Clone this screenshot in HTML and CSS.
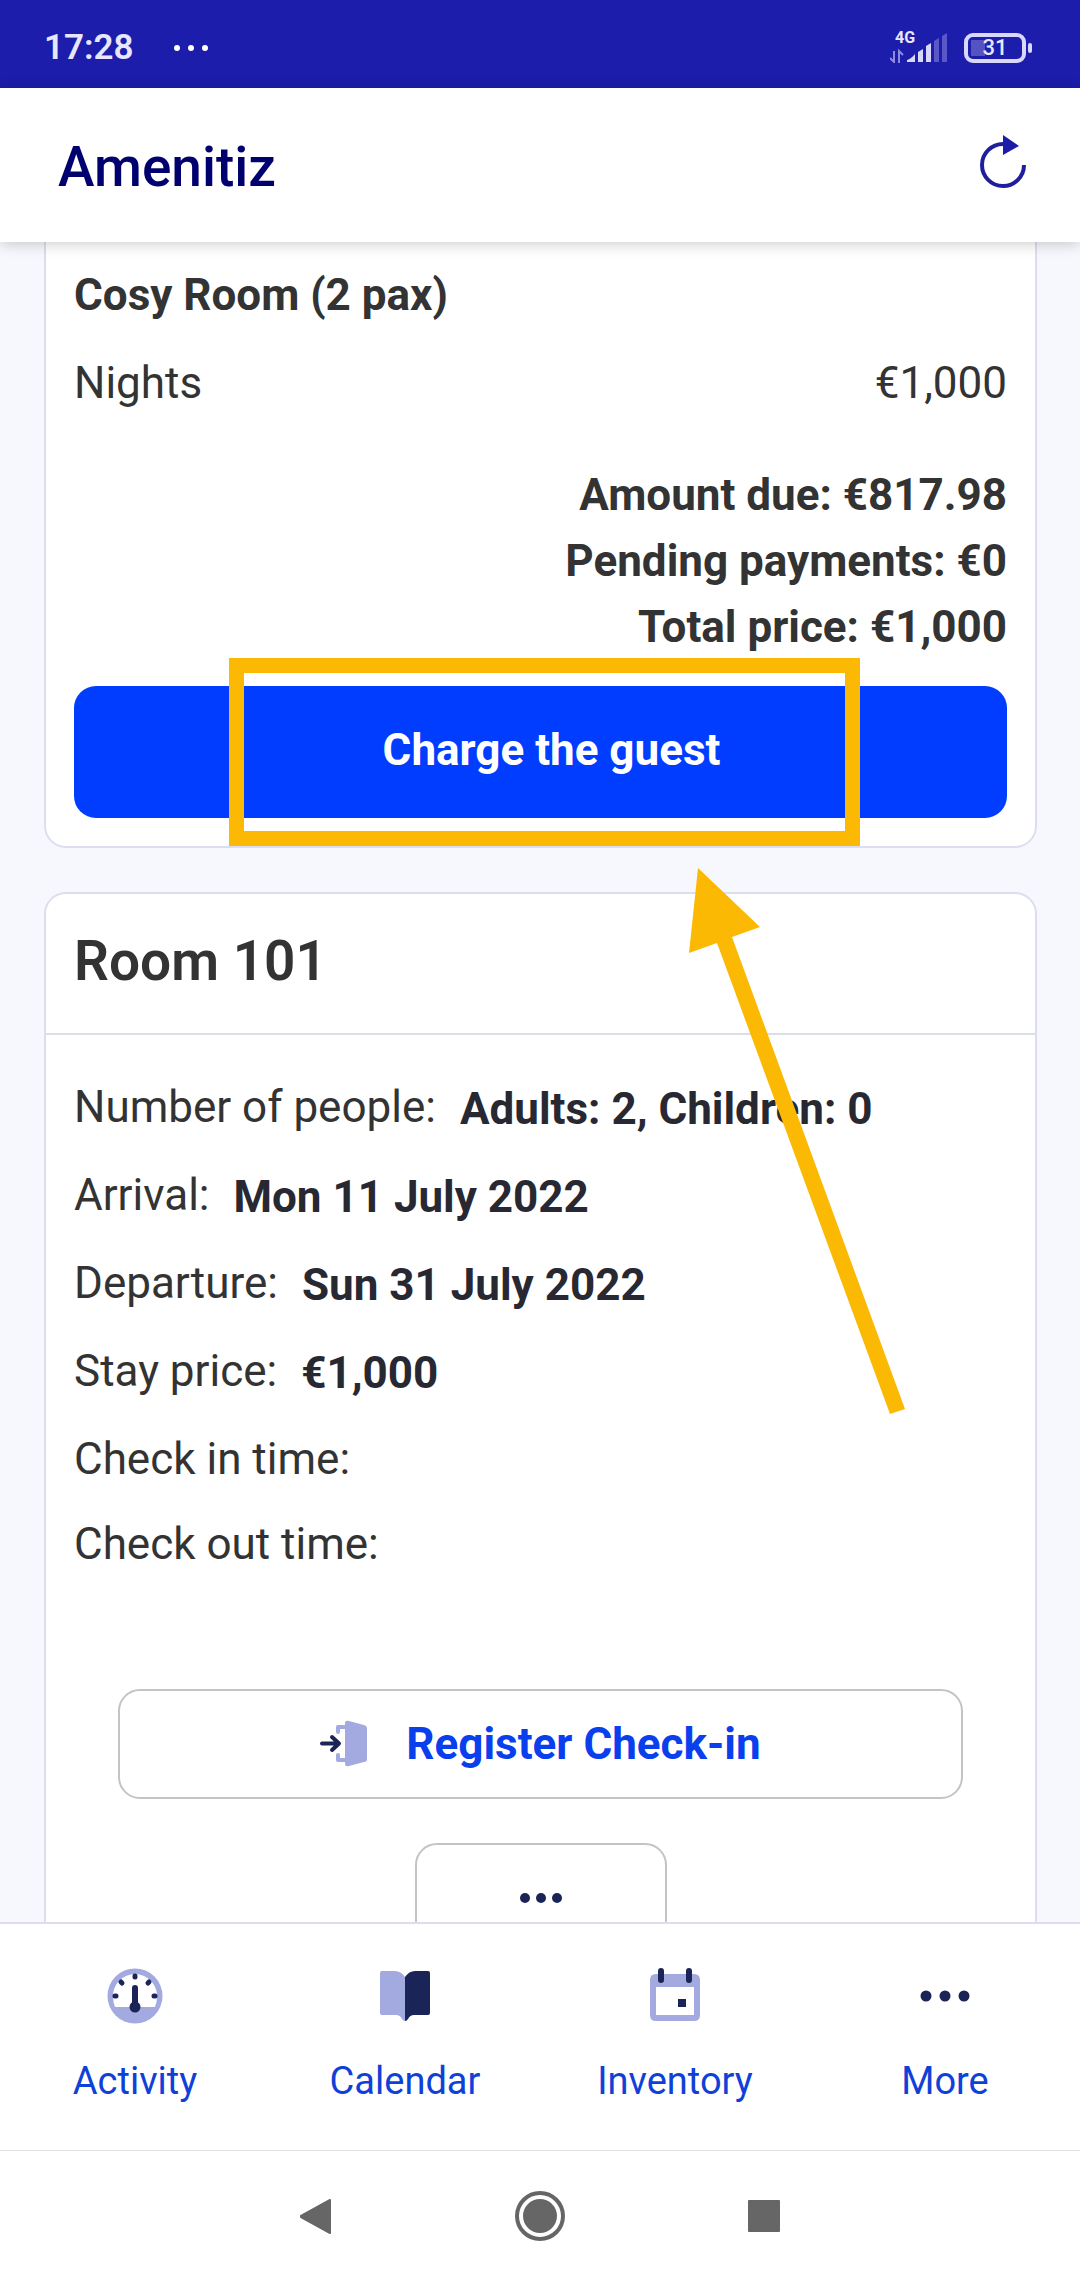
FILE: index.html
```html
<!DOCTYPE html>
<html lang="en">
<head>
    <meta charset="UTF-8">
    <meta name="viewport" content="width=device-width, initial-scale=1.0">
    <title>Amenitiz</title>
    <link rel="stylesheet" href="styles.css">
</head>
<body>
    <div class="status-bar">
        <div class="status-left">
            <span class="status-time">17:28</span>
            <svg class="status-dots" width="34" height="8" viewBox="0 0 34 8" fill="#fff">
                <circle cx="3" cy="4" r="3"/>
                <circle cx="17" cy="4" r="3"/>
                <circle cx="31" cy="4" r="3"/>
            </svg>
        </div>
        <div class="status-right">
            <div class="signal">
                <span class="signal-type">4G</span>
                <svg width="58" height="30" viewBox="0 0 58 30">
                    <path d="M4 18v11L0 25M9 30V18l4 4" fill="none" stroke="#8d8ae0" stroke-width="2"/>
                    <path d="M17 29v-2q4-1 8-6v8z" fill="#d9d7fb"/>
                    <path d="M28 29V19l5-3v13z" fill="#d9d7fb"/>
                    <path d="M36 29V13l5-3v19z" fill="#d9d7fb"/>
                    <path d="M44 29V8l5-3v24z" fill="#5a57c8"/>
                    <path d="M52 29V3l5-3v29z" fill="#5a57c8"/>
                </svg>
            </div>
            <div class="battery">
                <span class="battery-level">31</span>
            </div>
        </div>
    </div>

    <header class="app-bar">
        <h1 class="app-title">Amenitiz</h1>
        <button class="refresh-button" type="button" aria-label="Refresh">
            <svg width="46" height="54" viewBox="0 0 46 54">
                <path d="M44 30A21 21 0 1 1 23 9" fill="none" stroke="#1f1f9c" stroke-width="4"/>
                <path d="M23 0l16 11-16 9z" fill="#1c1ca8"/>
            </svg>
        </button>
    </header>

    <main class="content">
        <section class="card card-summary">
            <h2 class="room-type">Cosy Room (2 pax)</h2>
            <div class="price-row">
                <span>Nights</span>
                <span>€1,000</span>
            </div>
            <div class="totals">
                <p>Amount due: €817.98</p>
                <p>Pending payments: €0</p>
                <p>Total price: €1,000</p>
            </div>
            <div class="charge">
                <button class="charge-button" type="button">Charge the guest</button>
                <div class="highlight"></div>
                <svg class="arrow" width="230" height="560" viewBox="0 0 230 560" fill="#fbb904">
                    <path d="M18 8l62 59-28 10 173 472-15 5L37 83 9 93z"/>
                </svg>
            </div>
        </section>

        <section class="card card-room">
            <h2 class="room-title">Room 101</h2>
            <div class="room-body">
                <dl class="details">
                    <div class="detail"><dt>Number of people:</dt><dd>Adults: 2, Children: 0</dd></div>
                    <div class="detail"><dt>Arrival:</dt><dd>Mon 11 July 2022</dd></div>
                    <div class="detail"><dt>Departure:</dt><dd>Sun 31 July 2022</dd></div>
                    <div class="detail"><dt>Stay price:</dt><dd>€1,000</dd></div>
                    <div class="detail"><dt>Check in time:</dt></div>
                    <div class="detail"><dt>Check out time:</dt></div>
                </dl>
                <div class="actions">
                    <button class="outline-button" type="button">
                        <svg width="48" height="48" viewBox="0 0 48 48">
                            <path d="M25 3q0-3 4-2l15 4q3 1 3 3v31q0 3-3 3l-15 4q-4 1-4-2z" fill="#a2aae0"/>
                            <path d="M26 7h-8v5M26 40h-8v-5" fill="none" stroke="#a2aae0" stroke-width="4" stroke-linecap="round" stroke-linejoin="round"/>
                            <path d="M2 23.500h16M12 17l7 6.500-7 6.500" fill="none" stroke="#1b2456" stroke-width="4" stroke-linecap="round" stroke-linejoin="round"/>
                        </svg>
                        Register Check-in
                    </button>
                    <button class="outline-button more-button" type="button" aria-label="More actions">
                        <svg width="42" height="10" viewBox="0 0 42 10" fill="#1b2456">
                            <circle cx="5" cy="5" r="5"/>
                            <circle cx="21" cy="5" r="5"/>
                            <circle cx="37" cy="5" r="5"/>
                        </svg>
                    </button>
                </div>
            </div>
        </section>
    </main>

    <nav class="bottom-nav">
        <a href="#" class="nav-item">
            <svg width="56" height="56" viewBox="0 0 56 56">
                <circle cx="28" cy="28" r="27.500" fill="#a2aae0"/>
                <path d="M8 39q-2-5-2-11a22 22 0 0 1 44 0q0 6-2 11z" fill="#fff"/>
                <g fill="none" stroke="#1b2456" stroke-linecap="round">
                    <path d="M28 20v18" stroke-width="6"/>
                    <path d="M28 8v1M14 14l1 1M42 14l-1 1M8 28h1M48 28h-1" stroke-width="5"/>
                </g>
                <circle cx="28" cy="39" r="5.500" fill="#1b2456"/>
            </svg>
            <span>Activity</span>
        </a>
        <a href="#" class="nav-item">
            <svg width="56" height="56" viewBox="0 0 56 56">
                <path d="M28 9q-4-6-10-6H5q-2 0-2 2v40q0 2 2 2h14q4 0 6 4 1 2 3 2z" fill="#a2aae0"/>
                <path d="M28 9q4-6 10-6h13q2 0 2 2v40q0 2-2 2H37q-4 0-6 4-1 2-3 2z" fill="#1b2456"/>
            </svg>
            <span>Calendar</span>
        </a>
        <a href="#" class="nav-item">
            <svg width="56" height="56" viewBox="0 0 56 56">
                <path d="M9 6h38q6 0 6 6v35q0 6-6 6H9q-6 0-6-6V12q0-6 6-6zm0 13v28h38V19z" fill="#a2aae0" fill-rule="evenodd"/>
                <path d="M14 3v9M42 3v9" stroke="#1b2456" stroke-width="6" stroke-linecap="round"/>
                <rect x="31" y="31" width="8" height="8" fill="#1b2456"/>
            </svg>
            <span>Inventory</span>
        </a>
        <a href="#" class="nav-item">
            <svg width="56" height="56" viewBox="0 0 56 56" fill="#1b2456">
                <circle cx="9" cy="28" r="5.500"/>
                <circle cx="28" cy="28" r="5.500"/>
                <circle cx="47" cy="28" r="5.500"/>
            </svg>
            <span>More</span>
        </a>
    </nav>

    <div class="system-bar">
        <button class="system-button" type="button" aria-label="Back">
            <svg width="52" height="52" viewBox="0 0 52 52">
                <path d="M11 27l29 16V10L11 26z" fill="#666" stroke="#666" stroke-width="2" stroke-linejoin="round"/>
            </svg>
        </button>
        <button class="system-button" type="button" aria-label="Home">
            <svg width="52" height="52" viewBox="0 0 52 52">
                <circle cx="26" cy="26" r="23" fill="none" stroke="#666" stroke-width="4"/>
                <circle cx="26" cy="26" r="17" fill="#666"/>
            </svg>
        </button>
        <button class="system-button" type="button" aria-label="Recent apps">
            <svg width="52" height="52" viewBox="0 0 52 52">
                <rect x="10" y="10" width="32" height="32" rx="1" fill="#666"/>
            </svg>
        </button>
    </div>
</body>
</html>
```
FILE: styles.css
```css
* {
    margin: 0;
    padding: 0;
    box-sizing: border-box;
}

body {
    font-family: Roboto, "Liberation Sans", sans-serif;
    font-size: 44px;
    line-height: 66px;
    color: #333;
    background-color: #f6f8fe;
    height: 100vh;
    display: flex;
    flex-direction: column;
    overflow: hidden;
}

button {
    font: inherit;
    border: none;
    background: none;
    cursor: pointer;
}

svg {
    display: block;
    flex-shrink: 0;
}

/* Phone status bar */
.status-bar {
    flex-shrink: 0;
    height: 88px;
    padding: 8px 54px 0 44px;
    display: flex;
    justify-content: space-between;
    align-items: center;
    background-color: #1c1dab;
    color: #e8e6fd;
}

.status-left,
.status-right {
    display: flex;
    align-items: center;
}

.status-left {
    gap: 40px;
}

.status-right {
    gap: 16px;
}

.status-time {
    font-size: 35px;
    font-weight: 600;
    line-height: 44px;
}

.signal {
    position: relative;
}

.signal-type {
    position: absolute;
    top: -3px;
    left: 5px;
    font-size: 16px;
    font-weight: 700;
    line-height: 16px;
}

.battery {
    position: relative;
    width: 62px;
    height: 30px;
    border: 4px solid #d9d7fb;
    border-radius: 9px;
    display: flex;
    justify-content: center;
    align-items: center;
    background: linear-gradient(#5553c2, #5553c2) 3px 3px / 14px 16px no-repeat;
}

.battery::after {
    content: "";
    position: absolute;
    top: 6px;
    right: -10px;
    width: 4px;
    height: 10px;
    border-radius: 2px;
    background-color: #d9d7fb;
}

.battery-level {
    font-size: 22px;
    font-weight: 500;
    line-height: 22px;
}

/* App bar */
.app-bar {
    position: relative;
    z-index: 1;
    flex-shrink: 0;
    height: 154px;
    padding: 4px 54px 0 58px;
    display: flex;
    justify-content: space-between;
    align-items: center;
    background-color: #fff;
    box-shadow: 0 2px 14px rgba(0, 0, 0, 0.2);
}

.app-title {
    font-size: 55px;
    font-weight: 500;
    color: #00006e;
}

.refresh-button {
    padding-bottom: 10px;
}

.content {
    flex: 1;
    min-height: 0;
    padding: 0 43px 0 44px;
    display: flex;
    flex-direction: column;
    gap: 44px;
    overflow: hidden;
}

.card {
    flex-shrink: 0;
    background-color: #fff;
    border: 2px solid #dcdeef;
    border-radius: 22px;
}

.card-summary {
    padding: 20px 28px 28px;
    border-top: none;
    border-top-left-radius: 0;
    border-top-right-radius: 0;
}

.room-type {
    font-size: 44px;
    font-weight: 700;
}

.price-row {
    margin-top: 22px;
    display: flex;
    justify-content: space-between;
}

.totals {
    margin-top: 46px;
    text-align: right;
    font-weight: 700;
}

.charge {
    position: relative;
    margin-top: 26px;
}

.charge-button {
    display: block;
    width: 100%;
    height: 132px;
    padding: 0 0 4px 22px;
    border-radius: 22px;
    background-color: #003dff;
    color: #fff;
    font-weight: 700;
}

/* Callout drawn over the charge button */
.highlight {
    position: absolute;
    top: -28px;
    bottom: -28px;
    left: 155px;
    right: 147px;
    border: 15px solid #fbb904;
    pointer-events: none;
}

.arrow {
    position: absolute;
    top: 174px;
    left: 65%;
    pointer-events: none;
}

.room-title {
    padding: 34px 28px 39px;
    border-bottom: 2px solid #dcdee6;
    font-size: 55px;
    font-weight: 600;
}

.room-body {
    padding: 40px 28px 28px;
}

.details {
    display: flex;
    flex-direction: column;
    gap: 20px;
}

.detail {
    display: flex;
    align-items: flex-start;
    gap: 24px;
}

.detail dt {
    line-height: 65px;
}

.detail dd {
    line-height: 68px;
    font-weight: 700;
    color: #282833;
}

.actions {
    margin-top: 112px;
    padding: 0 44px;
    display: flex;
    flex-direction: column;
    align-items: center;
    gap: 44px;
}

.outline-button {
    width: 100%;
    height: 110px;
    display: flex;
    justify-content: center;
    align-items: center;
    gap: 38px;
    border: 2px solid #c3c3c8;
    border-radius: 22px;
    background-color: #fff;
    color: #0a3fee;
    font-weight: 700;
}

.more-button {
    width: 252px;
}

/* Bottom navigation */
.bottom-nav {
    position: relative;
    z-index: 1;
    flex-shrink: 0;
    height: 228px;
    padding-top: 44px;
    display: grid;
    grid-template-columns: repeat(4, 1fr);
    background-color: #fff;
    border-top: 2px solid #dcdeef;
}

.nav-item {
    display: flex;
    flex-direction: column;
    align-items: center;
    gap: 24px;
    color: #0f41d8;
    font-size: 38px;
    text-decoration: none;
}

/* Phone system buttons */
.system-bar {
    flex-shrink: 0;
    height: 130px;
    display: flex;
    justify-content: center;
    align-items: center;
    gap: 172px;
    background-color: #fff;
    border-top: 1px solid #e2e2e4;
}
```
